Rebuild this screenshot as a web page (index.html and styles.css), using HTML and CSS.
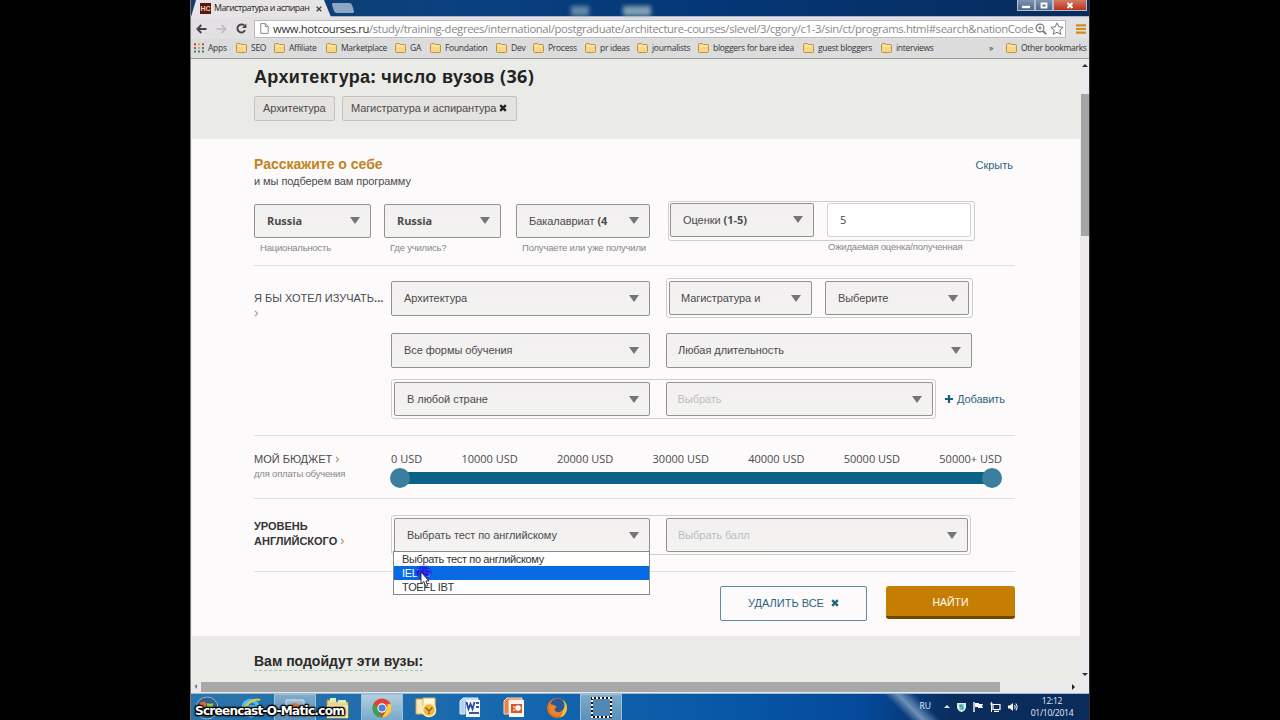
FILE: index.html
```html
<!DOCTYPE html>
<html lang="ru">
<head>
    <meta charset="utf-8">
    <title>Магистратура и аспирантура</title>
    <link rel="stylesheet" href="styles.css">
</head>
<body>
    <svg class="defs" width="0" height="0">
        <symbol id="folder" viewBox="0 0 11 10">
            <path d="M.5 1.5q0-1 1-1h3l1 1h4q1 0 1 1v6q0 1-1 1h-8q-1 0-1-1z" fill="#f5d787" stroke="#bd9248"/>
            <path d="M1.5 3h8" stroke="#fff0bd"/>
        </symbol>
        <symbol id="cross" viewBox="0 0 8 8">
            <path d="M1.2 1.2l5.6 5.6M6.8 1.2L1.2 6.8" stroke="currentColor" stroke-width="2.4"/>
        </symbol>
        <symbol id="chevron" viewBox="0 0 5 7">
            <path d="M1 .8l2.6 2.7L1 6.2" fill="none" stroke="currentColor" stroke-width="1.1"/>
        </symbol>
    </svg>

    <div class="screen">
        <!-- Вкладки -->
        <div class="tabs">
            <div class="tab">
                <span class="favicon">HC</span>
                <span class="tab-title">Магистратура и аспиран</span>
                <svg class="tab-close" width="6" height="6" viewBox="0 0 6 6"><path d="M.7.7l4.6 4.6M5.3.7L.7 5.3" stroke="#444" stroke-width="1.3"/></svg>
            </div>
            <div class="new-tab"></div>
            <div class="desk-icon desk-1"></div>
            <div class="desk-icon desk-2"></div>
            <div class="window-buttons">
                <span class="win"><svg width="8" height="8"><path d="M0 6h8" stroke="#fff" stroke-width="2.4"/></svg></span>
                <span class="win"><svg width="8" height="8"><path d="M1.5 2.5h5v4h-5z" fill="none" stroke="#fff" stroke-width="1.8"/></svg></span>
                <span class="win win-close"><svg width="8" height="8"><path d="M1.5 2l5 5M6.5 2l-5 5" stroke="#fff" stroke-width="2"/></svg></span>
            </div>
        </div>

        <!-- Адресная строка -->
        <div class="toolbar">
            <svg width="11" height="10" viewBox="0 0 11 10"><path d="M10.5 5H1.6M5.3 1L1.4 5l3.9 4" fill="none" stroke="#444" stroke-width="1.9"/></svg>
            <svg width="11" height="10" viewBox="0 0 11 10"><path d="M.5 5h8.9M5.7 1l3.9 4-3.9 4" fill="none" stroke="#bcbcbc" stroke-width="1.7"/></svg>
            <svg width="11" height="11" viewBox="0 0 11 11"><path d="M9 7.3A4 4 0 1 1 8.3 2.6" fill="none" stroke="#444" stroke-width="1.9"/><path d="M10.4.5v4.4H6z" fill="#444"/></svg>
            <div class="address">
                <svg width="9" height="11" viewBox="0 0 9 11"><path d="M.8.6h4.6l2.8 2.8v7H.8zM5.2.8v2.8h2.8" fill="#fff" stroke="#8b8b8b"/></svg>
                <span class="url"><b>www.hotcourses.ru</b>/study/training-degrees/international/postgraduate/architecture-courses/slevel/3/cgory/c1-3/sin/ct/programs.html#search&amp;nationCode</span>
                <svg width="12" height="12" viewBox="0 0 12 12"><circle cx="5" cy="5" r="3.9" fill="none" stroke="#777" stroke-width="1.2"/><path d="M3.2 5h3.6M5 3.2v3.6" stroke="#777"/><path d="M8 8l3.2 3.2" stroke="#777" stroke-width="1.8"/></svg>
                <svg width="14" height="13" viewBox="0 0 14 13"><path d="M7 .9l1.8 4 4.3.4-3.3 2.9 1 4.2L7 10.2l-3.8 2.2 1-4.2L.9 5.3l4.3-.4z" fill="#fff" stroke="#777"/></svg>
            </div>
            <svg class="menu-icon" width="10" height="10" viewBox="0 0 10 10"><path d="M0 1.4h10M0 5h10M0 8.6h10" stroke="#cf8d1e" stroke-width="2.1"/></svg>
        </div>

        <!-- Закладки -->
        <div class="bookmarks">
            <span><svg width="10" height="10" viewBox="0 0 10 10"><path d="M0 1.2h2" stroke="#d33" stroke-width="2"/><path d="M4 1.2h2M4 4.9h2" stroke="#e9a320" stroke-width="2"/><path d="M8 1.2h2M0 4.9h2" stroke="#c44d3a" stroke-width="2"/><path d="M8 4.9h2M4 8.6h2" stroke="#3a78c9" stroke-width="2"/><path d="M0 8.6h2M8 8.6h2" stroke="#2a9a4a" stroke-width="2"/></svg>Apps</span>
            <span><svg width="11" height="10"><use href="#folder"/></svg>SEO</span>
            <span><svg width="11" height="10"><use href="#folder"/></svg>Affiliate</span>
            <span><svg width="11" height="10"><use href="#folder"/></svg>Marketplace</span>
            <span><svg width="11" height="10"><use href="#folder"/></svg>GA</span>
            <span><svg width="11" height="10"><use href="#folder"/></svg>Foundation</span>
            <span><svg width="11" height="10"><use href="#folder"/></svg>Dev</span>
            <span><svg width="11" height="10"><use href="#folder"/></svg>Process</span>
            <span><svg width="11" height="10"><use href="#folder"/></svg>pr ideas</span>
            <span><svg width="11" height="10"><use href="#folder"/></svg>journalists</span>
            <span><svg width="11" height="10"><use href="#folder"/></svg>bloggers for bare idea</span>
            <span><svg width="11" height="10"><use href="#folder"/></svg>guest bloggers</span>
            <span><svg width="11" height="10"><use href="#folder"/></svg>interviews</span>
            <span>»</span>
            <span><svg width="11" height="10"><use href="#folder"/></svg>Other bookmarks</span>
        </div>

        <div class="viewport">
            <div class="page">
                <div class="page-head">
                    <h1>Архитектура<i>:</i> число вузов <i>(36)</i></h1>
                    <div class="tags">
                        <span class="tag tag-subject">Архитектура</span>
                        <span class="tag tag-level">Магистратура и аспирантура <svg width="8" height="8"><use href="#cross"/></svg></span>
                    </div>
                </div>

                <div class="search">
                    <div class="about">
                        <div class="about-title">
                            <h2>Расскажите о себе</h2>
                            <a class="hide">Скрыть</a>
                        </div>
                        <p>и мы подберем вам программу</p>
                        <div class="about-fields">
                            <div class="field nation"><div class="select"><b>Russia</b></div><small>Национальность</small></div>
                            <div class="field nation"><div class="select"><b>Russia</b></div><small>Где учились?</small></div>
                            <div class="field degree"><div class="select"><span>Бакалавриат <b>(4</b></span></div><small>Получаете или уже получили</small></div>
                            <div class="field grades">
                                <div class="group">
                                    <div class="select"><span>Оценки <b>(1-5)</b></span></div>
                                    <div class="input">5</div>
                                </div>
                                <small>Ожидаемая оценка/полученная</small>
                            </div>
                        </div>
                    </div>

                    <div class="row study">
                        <div class="label">Я БЫ ХОТЕЛ ИЗУЧАТЬ<em>...</em><br><svg width="5" height="7"><use href="#chevron"/></svg></div>
                        <div class="study-fields">
                            <div class="line line-1">
                                <div class="select wide">Архитектура</div>
                                <div class="group">
                                    <div class="select">Магистратура и</div>
                                    <div class="select">Выберите</div>
                                </div>
                            </div>
                            <div class="line line-2">
                                <div class="select wide">Все формы обучения</div>
                                <div class="select duration">Любая длительность</div>
                            </div>
                            <div class="line line-3">
                                <div class="group country">
                                    <div class="select">В любой стране</div>
                                    <div class="select disabled">Выбрать</div>
                                </div>
                                <a class="add"><svg width="8" height="8"><path d="M4 0v8M0 4h8" stroke="#175f7f" stroke-width="2.2"/></svg>Добавить</a>
                            </div>
                        </div>
                    </div>

                    <div class="row budget">
                        <div class="label">МОЙ БЮДЖЕТ <svg width="5" height="7"><use href="#chevron"/></svg><small>для оплаты обучения</small></div>
                        <div class="range">
                            <div class="scale">
                                <span>0 USD</span><span>10000 USD</span><span>20000 USD</span><span>30000 USD</span><span>40000 USD</span><span>50000 USD</span><span>50000+ USD</span>
                            </div>
                            <div class="slider"><span class="handle"></span><span class="handle"></span></div>
                        </div>
                    </div>

                    <div class="row english">
                        <div class="label strong">УРОВЕНЬ<br>АНГЛИЙСКОГО <svg width="5" height="7"><use href="#chevron"/></svg></div>
                        <div class="group exam">
                            <div class="select">Выбрать тест по английскому</div>
                            <div class="select disabled">Выбрать балл</div>
                            <div class="options">
                                <div>Выбрать тест по английскому</div>
                                <div class="active">IELTS<span class="click"></span></div>
                                <div>TOEFL IBT</div>
                                <svg class="cursor" width="10" height="17" viewBox="0 0 10 17"><path d="M1 1v12l2.8-2.4 2 4.8 2-.8-2-4.6H9z" fill="#fff" stroke="#223" stroke-width=".9"/></svg>
                            </div>
                        </div>
                    </div>

                    <div class="actions">
                        <div class="clear">УДАЛИТЬ ВСЕ <svg width="8" height="8"><use href="#cross"/></svg></div>
                        <div class="find">НАЙТИ</div>
                    </div>
                </div>

                <div class="results"><h3>Вам подойдут эти вузы:</h3></div>
            </div>
            <div class="vscroll">
                <svg width="6" height="4"><path d="M3 0l3 3H0z" fill="#333"/></svg>
                <div class="vthumb"></div>
                <svg width="6" height="4"><path d="M0 0h6L3 3z" fill="#333"/></svg>
            </div>
        </div>
        <div class="hscroll">
            <svg width="4" height="6"><path d="M3 0v5L.5 2.5z" fill="#777"/></svg>
            <div class="hthumb"></div>
            <svg width="4" height="6"><path d="M0 0v6l3-3z" fill="#222"/></svg>
        </div>

        <!-- Панель задач -->
        <div class="taskbar">
            <div class="task start"><svg width="24" height="24" viewBox="0 0 24 24"><circle cx="12" cy="12" r="11" fill="#315f8e" stroke="#8fb4d0"/><path d="M5 7q3-2 6-.5V11q-3-1-6 0z" fill="#e8692f"/><path d="M12 7q3 1.5 6 0v4.5q-3 1.5-6 0z" fill="#9ac53d"/><path d="M5 12q3-1 6 0v5H5z" fill="#4aa3df"/><path d="M12 12.5q3 1.5 6 0V17h-6z" fill="#f4c430"/></svg></div>
            <div class="task"><svg width="24" height="22" viewBox="0 0 24 22"><path d="M18.5 14a7.5 7.5 0 1 1 .5-4H6" fill="none" stroke="#4cc3f2" stroke-width="3.5"/><path d="M3 18C-1 14 14 0 21 3" fill="none" stroke="#e9c83c" stroke-width="2"/></svg></div>
            <div class="task open"><svg width="20" height="18" viewBox="0 0 20 18"><rect x="1" y="1" width="18" height="14" rx="1" fill="#9bb7ce" stroke="#d8e6f0"/><circle cx="10" cy="9" r="5" fill="#d57742"/></svg></div>
            <div class="task"><svg width="24" height="22" viewBox="0 0 24 22"><path d="M1 3h8l2 2h11v16H1z" fill="#e9d58e" stroke="#a98e42"/><path d="M4 1h6v4H4zM12 3h8v3h-8z" fill="#d8efc0"/><path d="M1 8h21v13H1z" fill="#f5e6a8"/></svg></div>
            <div class="task open current"><svg width="20" height="20" viewBox="0 0 20 20"><circle cx="10" cy="10" r="9.5" fill="#e34133"/><path d="M1.8 5.2l4.5 7.3 4.2 7A9.5 9.5 0 0 1 1.8 5.2" fill="#35a353"/><path d="M10 19.5l4.6-7.4 1-6.1h3A9.5 9.5 0 0 1 10 19.5" fill="#f8ce45"/><circle cx="10" cy="10" r="4.7" fill="#fff"/><circle cx="10" cy="10" r="3.6" fill="#4583d6"/></svg></div>
            <div class="task"><svg width="23" height="21" viewBox="0 0 23 21"><path d="M1 2h19v15H1z" fill="#f8e9bc" stroke="#dba53c"/><path d="M8 1h12v9H8z" fill="#fff8df" stroke="#dfb553"/><circle cx="14" cy="13" r="6.5" fill="#efb83e" stroke="#fff1b9" stroke-width="1.5"/><path d="M10.500 10.500L14 14l3.500-3.500M14 14v3" fill="none" stroke="#895b12" stroke-width="1.2"/></svg></div>
            <div class="task"><svg width="22" height="21" viewBox="0 0 22 21"><path d="M4 1L1 4v13h5V3h13V1z" fill="#b7d2ef" stroke="#e4effa"/><path d="M7 3h14v17H7z" fill="#f6f9ff"/><path d="M10 15h10v2H10zM17 5h3v2h-3zM17 9h3v2h-3z" fill="#3458a2"/><path d="M7.5 5l2 7 2-5 2 5 2-7" fill="none" stroke="#284a99" stroke-width="1.8"/></svg></div>
            <div class="task"><svg width="22" height="21" viewBox="0 0 22 21"><path d="M4 1L1 4v13h5V3h13V1z" fill="#e7824c" stroke="#ffd9bd"/><path d="M6 3h15v17H6z" fill="#fff5ec"/><path d="M8 7h11v9H8z" fill="#d7582a"/><circle cx="15" cy="11" r="2.8" fill="#fff"/><path d="M10 10h2M10 13h2" stroke="#fff"/></svg></div>
            <div class="task"><svg width="22" height="22" viewBox="0 0 22 22"><circle cx="11" cy="11" r="10" fill="#e5701f"/><path d="M17 3a10 10 0 0 1-3 17.5Q19 13 17 3" fill="#f7be3a"/><circle cx="11.5" cy="8.5" r="7" fill="#25599c"/><path d="M3 6q2 2 5 2l3 2q-3 1-2 4 4 3 8-1-1 6-7 6Q2 17 3 6" fill="#ec8627"/></svg></div>
            <div class="task open"><svg width="21" height="21" viewBox="0 0 21 21"><path d="M1 1h19v19H1z" fill="#5288b5" stroke="#111" stroke-width="2"/><path d="M1 1h19v19H1z" fill="none" stroke="#fff" stroke-width="2" stroke-dasharray="2 2"/></svg></div>
            <div class="tray">
                <span class="lang">RU</span>
                <svg width="6" height="4"><path d="M3 0l3 3H0z" fill="#d8e8f5"/></svg>
                <svg width="9" height="10" viewBox="0 0 9 10"><path d="M0 1h9v5q-1 3-4.5 4Q1 9 0 6z" fill="#d6f0ee"/><path d="M6.5 3H3v1.8h3V7H2.5" fill="none" stroke="#1e8a86" stroke-width="1.2"/></svg>
                <svg width="10" height="10" viewBox="0 0 10 10"><path d="M1 0v10" stroke="#fff" stroke-width="1.4"/><path d="M2 1h4v1h4L9 4l1 2H5V5H2z" fill="#fff"/></svg>
                <svg width="11" height="10" viewBox="0 0 11 10"><path d="M3 2.5h7v5H3zM4 9.4h5" fill="none" stroke="#fff" stroke-width="1.2"/><path d="M1.5 0v10M0 2h3" stroke="#fff"/></svg>
                <svg width="10" height="10" viewBox="0 0 10 10"><path d="M0 3.5h2L5 1v8L2 6.5H0z" fill="#fff"/><path d="M6.5 3q1.5 2 0 4M8 1.5q2.5 3.5 0 7" fill="none" stroke="#fff"/></svg>
                <div class="clock">12:12<br>01/10/2014</div>
            </div>
        </div>
        <div class="watermark">Screencast-O-Matic.com</div>
    </div>
</body>
</html>
```
FILE: styles.css
```css
* {
    box-sizing: border-box;
}

body {
    margin: 0;
    height: 720px;
    background: #000;
    font-family: "Liberation Sans", Arial, sans-serif;
    font-size: 11px;
    color: #4b4b4b;
    overflow: hidden;
}

h1, h2, h3, p {
    margin: 0;
}

svg {
    flex: none;
}

.defs {
    position: absolute;
}

.screen {
    position: relative;
    width: 900px;
    height: 720px;
    margin: 0 auto;
    display: flex;
    flex-direction: column;
    background: #d9d9db;
    border-left: 1px solid #777;
    border-right: 1px solid #333;
    white-space: nowrap;
}

/* Вкладки */
.tabs {
    position: relative;
    display: flex;
    height: 17px;
    background: linear-gradient(90deg, #123e6c, #09417f 30%, #043675 60%, #082b5c);
    border-bottom: 1px solid #a8b6c8;
    font-family: "Open Sans", sans-serif;
}

.tab {
    display: flex;
    align-items: center;
    width: 140px;
    height: 17px;
    padding-left: 9px;
    background: #e7e4e6;
    clip-path: polygon(5px 0, 133px 0, 140px 100%, 0 100%);
}

.favicon {
    width: 11px;
    height: 11px;
    background: #5c1712;
    color: #f0d2b0;
    font: bold 7px/11px "Liberation Sans", sans-serif;
    text-align: center;
}

.tab-title {
    width: 100px;
    margin-left: 3px;
    padding-bottom: 1px;
    font-size: 8.8px;
    letter-spacing: -.48px;
    color: #222;
}

.tab-close {
    margin-left: 2px;
}

.new-tab {
    width: 20px;
    height: 10px;
    margin: 3px 0 0 2px;
    background: #8ea6c5;
    transform: skewX(18deg);
    border-radius: 2px;
}

.desk-icon {
    position: absolute;
    top: 6px;
    height: 10px;
    background: #9fb9c2;
    filter: blur(2px);
}

.desk-1 {
    left: 380px;
    width: 18px;
    opacity: .6;
}

.desk-2 {
    left: 432px;
    width: 28px;
    opacity: .8;
}

.window-buttons {
    display: flex;
    margin-left: auto;
    margin-right: 2px;
    height: 11px;
}

.win {
    display: flex;
    align-items: center;
    justify-content: center;
    width: 18px;
    background: linear-gradient(#8095b1, #4d668b);
    border: 1px solid #b0bfd2;
    border-top: 0;
}

.win-close {
    width: 34px;
    background: linear-gradient(#d07a66, #bd3219);
}

/* Адресная строка */
.toolbar {
    display: flex;
    align-items: center;
    height: 22px;
    padding: 1px 4px 0 5px;
    gap: 9px;
    background: #e2e0e2;
}

.address {
    display: flex;
    align-items: center;
    width: 812px;
    height: 18px;
    margin-left: -2px;
    padding: 0 3px 0 5px;
    background: #fff;
    border: 1px solid #bbb;
}

.url {
    width: 761px;
    margin: 0 1px 0 4px;
    font-family: "Open Sans", sans-serif;
    font-size: 11.3px;
    letter-spacing: -.37px;
    color: #888;
}

.url b {
    color: #333;
    font-weight: normal;
}

.address svg:last-child {
    margin-left: 3px;
}

.menu-icon {
    margin-left: 1px;
}

/* Закладки */
.bookmarks {
    display: grid;
    grid-template-columns: 42px 38px 52px 69px 35px 66px 37px 52px 52px 61px 105px 78px 108px 17px 84px;
    align-items: center;
    height: 20px;
    padding: 0 0 2px 3px;
    background: #dddcdd;
    border-bottom: 1px solid #999;
    font-family: "Open Sans", sans-serif;
    font-size: 8.5px;
    letter-spacing: -.28px;
    color: #333;
}

.bookmarks span {
    display: flex;
    align-items: center;
    gap: 4px;
}

/* Страница */
.viewport {
    display: flex;
    height: 623px;
}

.page {
    width: 889px;
    background: #fcfafb;
    border-left: 1px solid #eee;
}

.page-head {
    height: 80px;
    padding: 6px 0 0 62px;
    background: #eaebe6;
}

h1 {
    font-size: 18px;
    line-height: 22px;
    letter-spacing: .34px;
    color: #222;
}

h1 i {
    font-family: "Open Sans", sans-serif;
    font-style: normal;
}

.tags {
    display: flex;
    gap: 7px;
    margin-top: 8px;
}

.tag {
    height: 25px;
    padding-left: 8px;
    line-height: 22px;
    letter-spacing: -.1px;
    background: #e4e3df;
    border: 1px solid #c3c2bf;
    border-radius: 2px;
}

.tag svg {
    color: #222;
}

.tag-subject {
    width: 81px;
}

.tag-level {
    width: 175px;
}

.search {
    height: 497px;
    padding: 17px 0 0 62px;
}

.about {
    width: 761px;
    height: 110px;
    border-bottom: 1px solid #e1dfe0;
}

.about-title {
    display: flex;
    justify-content: space-between;
    padding-right: 2px;
    height: 18px;
    line-height: 18px;
}

h2 {
    font-size: 14px;
    line-height: 17px;
    color: #c0841c;
}

.hide, .add {
    color: #2c6480;
}

.about p {
    height: 18px;
    line-height: 15px;
    letter-spacing: -.07px;
}

.about-fields {
    display: flex;
    align-items: flex-start;
    padding-top: 12px;
}

.field .select {
    width: 100%;
    padding-bottom: 1px;
}

.nation {
    width: 117px;
    margin-right: 13px;
}

.degree {
    width: 134px;
    margin-left: 2px;
}

.grades {
    width: 307px;
    margin: -3px 0 0 18px;
}

small {
    display: block;
    font-size: 9.5px;
    letter-spacing: -.2px;
    color: #888;
}

.field small {
    padding: 4px 0 0 6px;
}

.select {
    position: relative;
    display: flex;
    align-items: center;
    height: 34px;
    padding: 0 10px 0 12px;
    background: linear-gradient(#f2f0f1, #f3f3f0);
    border: 1px solid #929292;
    border-radius: 2px;
    letter-spacing: -.06px;
}

.select::after {
    content: "";
    margin-left: auto;
    border: 5px solid transparent;
    border-top: 7px solid #757575;
    border-bottom: 0;
}

.select b {
    font-family: "Open Sans", sans-serif;
}

.disabled {
    padding-left: 11px;
    color: #bdbdbd;
}

.group {
    display: flex;
    height: 40px;
    padding: 2px;
    border: 1px solid #cfcdce;
    border-radius: 3px;
}

.grades .group {
    padding: 1px;
}

.grades .select {
    width: 144px;
}

.input {
    width: 144px;
    height: 34px;
    margin-left: 13px;
    padding-left: 12px;
    border: 1px solid #d5d3d4;
    border-radius: 2px;
    background: #fff;
    font-family: "Open Sans", sans-serif;
    line-height: 31px;
}

.field.grades small {
    padding: 0 0 0 160px;
}

/* Строки формы */
.row {
    display: flex;
    width: 761px;
    border-bottom: 1px solid #e1dfe0;
}

.label {
    width: 137px;
    font-size: 11px;
    line-height: 15px;
}

.label svg {
    color: #a8a070;
}

.label em {
    font: bold 11px "Open Sans", sans-serif;
}

.strong {
    font-weight: bold;
    color: #333;
}

.study {
    height: 170px;
    padding-top: 12px;
}

.study .label {
    padding-top: 12px;
}

.line {
    display: flex;
}

.line-1 {
    height: 55px;
}

.line-1 .wide {
    margin-top: 3px;
    height: 35px;
    padding-bottom: 1px;
}

.wide {
    width: 259px;
    margin-right: 16px;
}

.line-1 .group {
    width: 307px;
    padding: 2px 2px 1px;
}

.line-1 .group .select {
    width: 143px;
    padding-left: 11px;
    margin-right: 13px;
}

.line-1 .group .select + .select {
    width: 144px;
    padding-left: 12px;
    margin-right: 0;
}

.line-2 {
    height: 46px;
}

.line-2 .select {
    height: 35px;
    padding-bottom: 1px;
}

.line .duration {
    width: 306px;
    padding-left: 11px;
}

.country {
    width: 545px;
}

.country .select {
    width: 256px;
}

.country .disabled {
    width: 268px;
    margin-left: 16px;
}

.add {
    display: flex;
    align-items: center;
    gap: 4px;
    margin-left: 9px;
    letter-spacing: -.1px;
}

/* Бюджет */
.budget {
    height: 63px;
    padding-top: 16px;
}

.budget small {
    line-height: 13px;
}

.range {
    width: 611px;
}

.scale {
    display: flex;
    justify-content: space-between;
    height: 21px;
    font-family: "Open Sans", sans-serif;
    font-size: 11px;
    line-height: 13px;
}

.slider {
    display: flex;
    justify-content: space-between;
    align-items: center;
    height: 12px;
    margin: -1px 0 0 -1px;
    background: linear-gradient(90deg, transparent 5px, #0a6287 5px, #0a6287 606px, transparent 606px);
}

.handle {
    width: 20px;
    height: 20px;
    border-radius: 50%;
    background: #3a7f9e;
}

/* Английский */
.english {
    height: 73px;
    padding-top: 16px;
}

.english .label {
    padding-top: 4px;
}

.exam {
    position: relative;
    width: 580px;
}

.exam .select {
    width: 256px;
}

.exam .disabled {
    width: 302px;
    margin-left: 16px;
}

.options {
    position: absolute;
    top: 35px;
    left: 1px;
    width: 257px;
    height: 44px;
    background: #fff;
    border: 1px solid #888;
    color: #333;
    line-height: 14px;
    letter-spacing: -.36px;
    z-index: 2;
}

.options div {
    height: 14px;
    padding-left: 8px;
}

.options .active {
    position: relative;
    background: #0869e4;
    color: #fff;
}

.click {
    position: absolute;
    left: 22px;
    top: 0;
    width: 15px;
    height: 13px;
    border-radius: 50%;
    background: #1717dd;
    opacity: .85;
    filter: blur(1px);
}

.cursor {
    position: absolute;
    left: 26px;
    top: 19px;
}

.actions {
    display: flex;
    justify-content: flex-end;
    width: 761px;
    padding-top: 14px;
}

.clear {
    width: 147px;
    height: 35px;
    margin-right: 19px;
    border: 1px solid #5c8da0;
    border-radius: 2px;
    color: #2c6480;
    font-size: 11px;
    line-height: 33px;
    text-align: center;
}

.clear svg {
    margin-left: 4px;
}

.find {
    width: 129px;
    height: 33px;
    background: #c67e02;
    border-bottom: 3px solid #714600;
    border-radius: 3px;
    color: #fff;
    font-size: 10.5px;
    line-height: 32px;
    text-align: center;
}

.results {
    height: 46px;
    padding: 16px 0 0 62px;
    background: #eaeae6;
}

h3 {
    display: inline-block;
    border-bottom: 1px dashed #a4c4b8;
    font-size: 14px;
    line-height: 18px;
    color: #2b2b2b;
}

/* Прокрутка */
.vscroll {
    display: flex;
    flex-direction: column;
    align-items: center;
    width: 9px;
    padding: 5px 0;
    background: #ebe9eb;
}

.vthumb {
    width: 8px;
    height: 142px;
    margin: 26px 0 auto;
    background: #a5a5a5;
}

.hscroll {
    display: flex;
    align-items: center;
    height: 11px;
    padding: 0 0 1px 3px;
    background: #ebe9eb;
}

.hthumb {
    width: 799px;
    height: 10px;
    margin: 0 72px 0 3px;
    background: #a9a8a8;
}

/* Панель задач */
.taskbar {
    display: flex;
    height: 27px;
    background: linear-gradient(45deg, transparent 508px, #6f91b8 518px, transparent 530px), linear-gradient(90deg, #2b75a9, #1668ae 35%, #0757a6 60%, #05499a 75%, #0a2c5d 85%);
    border-top: 1px solid #9bbdd6;
}

.task {
    display: flex;
    align-items: center;
    justify-content: center;
    width: 43.8px;
    height: 27px;
}

.start {
    width: 38px;
    padding-right: 6px;
}

.open {
    width: 41.8px;
    margin: 0 1px;
    background: linear-gradient(#80abc9, #5a90bb);
    border: 1px solid #9cc0d8;
}

.current {
    background: linear-gradient(#b2cfdf, #77a9cb);
}

.tray {
    display: flex;
    align-items: center;
    margin-left: auto;
    color: #e2ecf7;
    font-family: "Open Sans", sans-serif;
    font-size: 8.5px;
    gap: 7px;
}

.lang {
    margin: 0 6px 3px 0;
}

.clock {
    width: 54px;
    margin: 0 10px 0 0;
    line-height: 12px;
    letter-spacing: -.25px;
    text-align: center;
}

.watermark {
    position: absolute;
    left: 4px;
    top: 703px;
    color: #fff;
    font: bold 12px/16px "DejaVu Sans", sans-serif;
    letter-spacing: -.7px;
    text-shadow: 1px 1px 1px #000, -1px -1px 1px #000, 1px -1px 1px #000, -1px 1px 1px #000, 0 0 3px #000, 0 0 3px #000;
}
```
